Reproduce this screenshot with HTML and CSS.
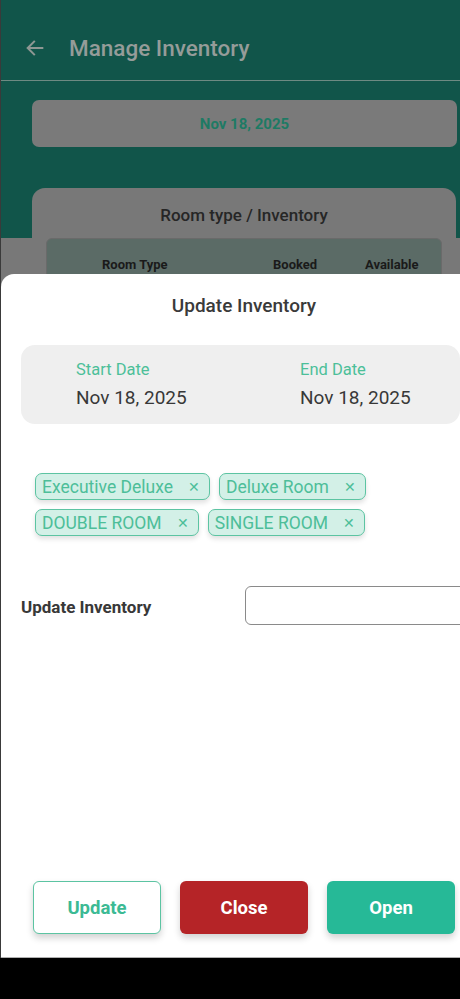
FILE: index.html
```html
<!DOCTYPE html>
<html>
<head>
<meta charset="utf-8">
<link rel="stylesheet" href="styles.css">
</head>
<body>
<div class="screen">
  <div class="page">
    <header class="appbar">
      <svg class="back" width="22" height="22" viewBox="0 0 24 24"><path d="M20 12H5M11 5l-7 7 7 7" fill="none" stroke="#8e9793" stroke-width="2.2" stroke-linecap="square"/></svg>
      <span class="appbar-title">Manage Inventory</span>
    </header>
    <section class="hero">
      <div class="date-pill">Nov 18, 2025</div>
    </section>
    <section class="rest">
      <div class="card">
        <div class="card-title">Room type / Inventory</div>
        <div class="table-head">
          <span class="th th-type">Room Type</span>
          <span class="th th-booked">Booked</span>
          <span class="th th-avail">Available</span>
        </div>
      </div>
    </section>
  </div>

  <div class="sheet">
    <div class="sheet-title">Update Inventory</div>
    <div class="dates">
      <div class="date-col">
        <div class="date-label">Start Date</div>
        <div class="date-value">Nov 18, 2025</div>
      </div>
      <div class="date-col">
        <div class="date-label">End Date</div>
        <div class="date-value">Nov 18, 2025</div>
      </div>
    </div>
    <div class="chips">
      <span class="chip">Executive Deluxe<span class="x">✕</span></span>
      <span class="chip">Deluxe Room<span class="x">✕</span></span>
      <span class="chip">DOUBLE ROOM<span class="x">✕</span></span>
      <span class="chip">SINGLE ROOM<span class="x">✕</span></span>
    </div>
    <div class="field">
      <span class="field-label">Update Inventory</span>
      <div class="input"></div>
    </div>
    <div class="spacer"></div>
    <div class="actions">
      <button class="btn btn-update">Update</button>
      <button class="btn btn-close">Close</button>
      <button class="btn btn-open">Open</button>
    </div>
  </div>
</div>
<div class="navbar"></div>
</body>
</html>
```

FILE: styles.css
```css
* { box-sizing: border-box; }
html, body { margin: 0; padding: 0; }
body {
  width: 460px;
  height: 999px;
  overflow: hidden;
  background: #000;
  font-family: Roboto, "Noto Sans", "Liberation Sans", sans-serif;
}
.screen {
  position: relative;
  height: 958px;
  overflow: hidden;
  border-left: 1px solid #3a3a3a;
  background: #787878;
}
.page { display: flex; flex-direction: column; }
.appbar {
  height: 81px;
  background: #11554a;
  border-bottom: 1px solid #6e8a83;
  display: flex;
  align-items: center;
  padding: 16px 0 0 23px;
}
.back { margin-right: 23px; }
.appbar-title {
  color: #959c99;
  font-size: 22.5px;
  font-weight: 500;
}
.hero {
  background: #11554a;
  height: 157px;
  padding: 19px 3px 0 31px;
}
.date-pill {
  height: 47px;
  background: #7a7a7a;
  border-radius: 7px;
  display: flex;
  align-items: center;
  justify-content: center;
  color: #1e7a64;
  font-weight: 700;
  font-size: 15px;
}
.rest {
  background: #787878;
  height: 720px;
  position: relative;
}
.card {
  position: absolute;
  left: 31px;
  top: -50px;
  width: 424px;
  height: 400px;
  background: #787878;
  border-radius: 13px;
  padding: 17px 14px 0 14px;
}
.card-title {
  text-align: center;
  font-size: 17px;
  font-weight: 500;
  color: #262626;
  height: 33px;
}
.table-head {
  height: 60px;
  background: #5b6b66;
  border: 1px solid #6a6a6a;
  border-radius: 6px;
  position: relative;
  font-size: 13px;
  font-weight: 700;
  color: #1a1a1a;
}
.th { position: absolute; top: 18px; }
.th-type { left: 55px; }
.th-booked { left: 226px; }
.th-avail { left: 318px; }

.sheet {
  position: absolute;
  left: 0;
  top: 274px;
  width: 488px;
  height: 684px;
  background: #fff;
  border-radius: 13px 13px 0 0;
  border-bottom: 1px solid #b0b0b0;
  display: flex;
  flex-direction: column;
  padding: 20px 0 0 20px;
}
.sheet-title {
  text-align: center;
  padding-right: 22px;
  font-size: 19px;
  font-weight: 500;
  color: #3a3a3a;
  line-height: 24px;
}
.dates {
  margin-top: 27px;
  width: 439px;
  height: 79px;
  background: #efefef;
  border-radius: 14px;
  display: grid;
  grid-template-columns: 224px 1fr;
  padding: 14px 0 0 55px;
}
.date-label {
  color: #4cbf99;
  font-size: 16.5px;
  line-height: 22px;
}
.date-value {
  color: #383838;
  font-size: 19px;
  line-height: 24px;
  margin-top: 5px;
}
.chips {
  margin-top: 49px;
  width: 360px;
  padding-left: 14px;
  display: flex;
  flex-wrap: wrap;
  gap: 9px;
}
.chip {
  height: 27px;
  display: inline-flex;
  align-items: center;
  padding: 0 9px 0 6px;
  background: #d3f0e7;
  border: 1.5px solid #5cc4a2;
  border-radius: 7px;
  color: #4dbe99;
  font-size: 17.5px;
  box-shadow: 0 3px 5px rgba(0,0,0,0.12);
}
.x {
  margin-left: 15px;
  font-size: 14px;
}
.field {
  margin-top: 50px;
  display: flex;
  align-items: center;
  height: 39px;
}
.field-label {
  width: 224px;
  flex-shrink: 0;
  font-weight: 700;
  font-size: 17px;
  color: #383838;
  padding-top: 2px;
}
.input {
  flex-shrink: 0;
  width: 260px;
  height: 39px;
  border: 1.5px solid #8a8a8a;
  border-radius: 6px;
}
.spacer { flex: 1; }
.actions {
  display: flex;
  gap: 19px;
  padding-left: 12px;
  margin-bottom: 23px;
}
.btn {
  width: 128px;
  height: 53px;
  border-radius: 6px;
  font-family: Roboto, "Noto Sans", "Liberation Sans", sans-serif;
  font-size: 18.5px;
  font-weight: 700;
  border: none;
  box-shadow: 0 4px 7px rgba(0,0,0,0.18);
}
.btn-update {
  background: #fff;
  border: 1.5px solid #5cc4a2;
  color: #3cba94;
}
.btn-close { background: #b52427; color: #fff; }
.btn-open { background: #26b997; color: #fff; }
.navbar { height: 41px; background: #000; }
```
